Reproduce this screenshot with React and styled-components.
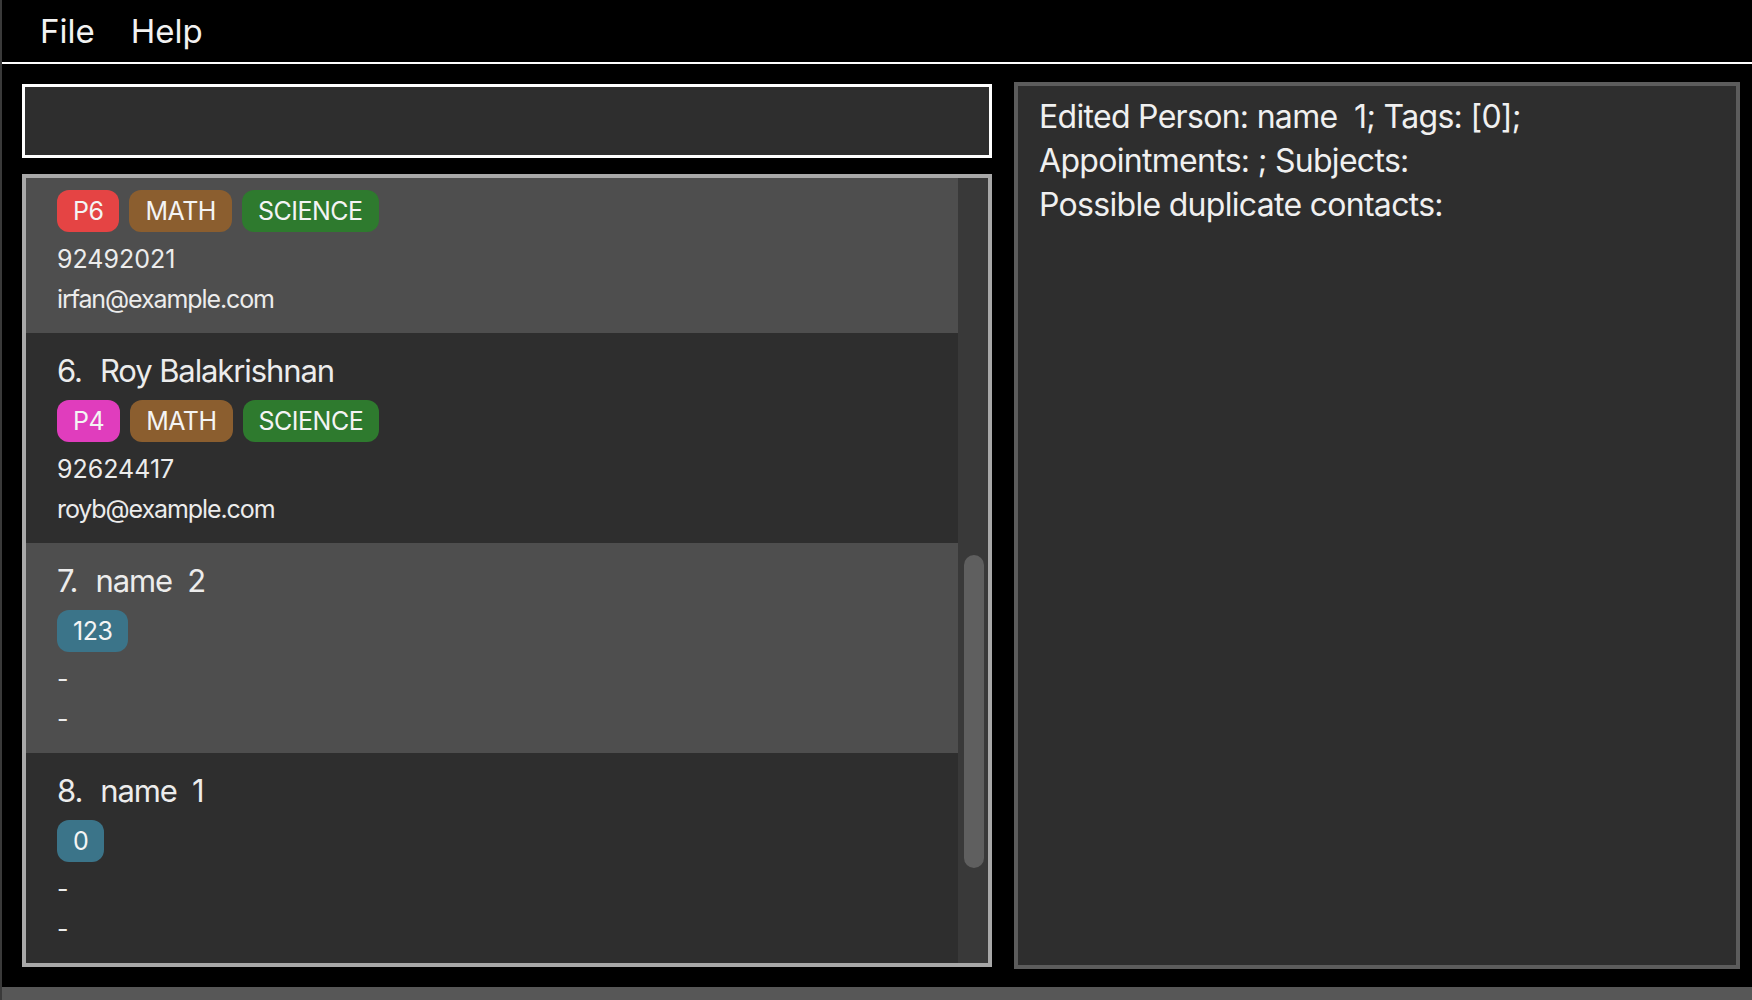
import React, { useLayoutEffect, useRef } from "react";
import styled, { createGlobalStyle } from "styled-components";

const GlobalStyle = createGlobalStyle`
	* {
		box-sizing: border-box;
	}
	html, body {
		margin: 0;
		padding: 0;
		background: #000;
	}
	body {
		font-family: Inter, "Open Sans", sans-serif;
		color: #eeeeee;
	}
`;

const Window = styled.div`
	width: 1752px;
	height: 1000px;
	background: #000;
	border-left: 2px solid #3a3a3a;
	display: flex;
	flex-direction: column;
	overflow: hidden;
`;

const MenuBar = styled.div`
	height: 64px;
	flex: none;
	display: flex;
	align-items: center;
	padding-left: 20px;
	border-bottom: 2px solid #ffffff;
`;

const MenuItem = styled.div`
	padding: 0 18px;
	font-size: 33px;
	line-height: 62px;
	color: #f2f2f2;
`;

const Main = styled.div`
	flex: 1;
	min-height: 0;
	display: flex;
	gap: 22px;
	padding: 18px 12px 18px 20px;
`;

const LeftColumn = styled.div`
	width: 970px;
	flex: none;
	display: flex;
	flex-direction: column;
	gap: 16px;
	margin: 2px 0;
`;

const CommandBox = styled.div`
	height: 74px;
	flex: none;
	background: #2e2e2e;
	border: 3px solid #ffffff;
`;

const ListPanel = styled.div`
	flex: 1;
	min-height: 0;
	display: flex;
	border: 4px solid #a8a8a8;
	background: #393939;
`;

const ListViewport = styled.div`
	flex: 1;
	overflow: hidden;
`;

const ScrollTrack = styled.div`
	width: 30px;
	flex: none;
	background: #393939;
	padding: ${(props) => props.$offset}px 4px 0 6px;
`;

const ScrollThumb = styled.div`
	height: ${(props) => props.$size}px;
	border-radius: 10px;
	background: #5f5f5f;
`;

const Card = styled.div`
	height: 210px;
	padding: 18px 0 14px 31px;
	background: ${(props) => (props.$light ? "#4e4e4e" : "#2e2e2e")};
`;

const NameRow = styled.div`
	display: flex;
	font-size: 31px;
	line-height: 40px;
	letter-spacing: -1.1px;
	color: #ececec;
	white-space: pre;
`;

const Index = styled.span`
	margin-right: 18px;
`;

const TagRow = styled.div`
	display: flex;
	gap: 10px;
	height: 42px;
	margin-top: 9px;
`;

const Tag = styled.span`
	height: 42px;
	padding: 0 16px;
	border-radius: 12px;
	background: ${(props) => props.$bg};
	font-size: 25px;
	line-height: 42px;
	letter-spacing: -0.5px;
	color: #f4f4f4;
`;

const Detail = styled.div`
	font-size: 25px;
	line-height: 40px;
	letter-spacing: ${(props) => (props.$tight ? "-1.1px" : "0")};
	color: #ececec;
	margin-top: ${(props) => props.$gap || 0}px;
`;

const ResultPanel = styled.div`
	flex: 1;
	background: #2e2e2e;
	border: 4px solid #5c5c5c;
	padding: 9px 21px;
`;

const ResultLine = styled.div`
	font-size: 32px;
	line-height: 44px;
	letter-spacing: -0.7px;
	color: #f0f0f0;
	white-space: pre;
`;

const StatusBar = styled.div`
	height: 13px;
	flex: none;
	background: #575757;
`;

const tagColours = {
	P4: "#e03dbd",
	P5: "#e0913d",
	P6: "#e54444",
	MATH: "#8b5e2f",
	SCIENCE: "#2e7a2e",
	ENGLISH: "#3d5fe0",
};

const persons = [
	{ name: "Alex Yeoh", tags: ["P4", "MATH"], phone: "87438807", email: "alexyeoh@example.com" },
	{ name: "Bernice Yu", tags: ["P5", "ENGLISH"], phone: "99272758", email: "berniceyu@example.com" },
	{ name: "Charlotte Oliveiro", tags: ["P6", "SCIENCE"], phone: "93210283", email: "charlotte@example.com" },
	{ name: "David Li", tags: ["P4", "MATH"], phone: "91031282", email: "lidavid@example.com" },
	{ name: "Irfan Ibrahim", tags: ["P6", "MATH", "SCIENCE"], phone: "92492021", email: "irfan@example.com" },
	{ name: "Roy Balakrishnan", tags: ["P4", "MATH", "SCIENCE"], phone: "92624417", email: "royb@example.com" },
	{ name: "name  2", tags: ["123"], phone: "-", email: "-" },
	{ name: "name  1", tags: ["0"], phone: "-", email: "-" },
	{ name: "name  0", tags: ["1"], phone: "-", email: "-" },
];

// the list is scrolled so that card 5 is partly hidden under the top edge
const FIRST_SHOWN = 4;
const HIDDEN_PART = 55;

const PersonCard = ({ person, index }) => (
	<Card $light={index % 2 === 1}>
		<NameRow>
			<Index>{index}.</Index>
			<span>{person.name}</span>
		</NameRow>
		<TagRow>
			{person.tags.map((tag) => (
				<Tag key={tag} $bg={tagColours[tag] || "#3b7489"}>
					{tag}
				</Tag>
			))}
		</TagRow>
		<Detail $gap={7}>{person.phone}</Detail>
		<Detail $tight>{person.email}</Detail>
	</Card>
);

const App = () => {
	const listRef = useRef(null);

	useLayoutEffect(() => {
		if (listRef.current) {
			listRef.current.scrollTop = HIDDEN_PART;
		}
	}, []);

	return (
		<>
			<GlobalStyle />
			<Window>
				<MenuBar>
					<MenuItem>File</MenuItem>
					<MenuItem>Help</MenuItem>
				</MenuBar>
				<Main>
					<LeftColumn>
						<CommandBox />
						<ListPanel>
							<ListViewport ref={listRef}>
								{persons.slice(FIRST_SHOWN).map((person, i) => (
									<PersonCard
										key={person.name}
										person={person}
										index={FIRST_SHOWN + i + 1}
									/>
								))}
							</ListViewport>
							<ScrollTrack $offset={377}>
								<ScrollThumb $size={313} />
							</ScrollTrack>
						</ListPanel>
					</LeftColumn>
					<ResultPanel>
						<ResultLine>Edited Person: name  1; Tags: [0];</ResultLine>
						<ResultLine>Appointments: ; Subjects:</ResultLine>
						<ResultLine>Possible duplicate contacts:</ResultLine>
					</ResultPanel>
				</Main>
				<StatusBar />
			</Window>
		</>
	);
};

export default App;
